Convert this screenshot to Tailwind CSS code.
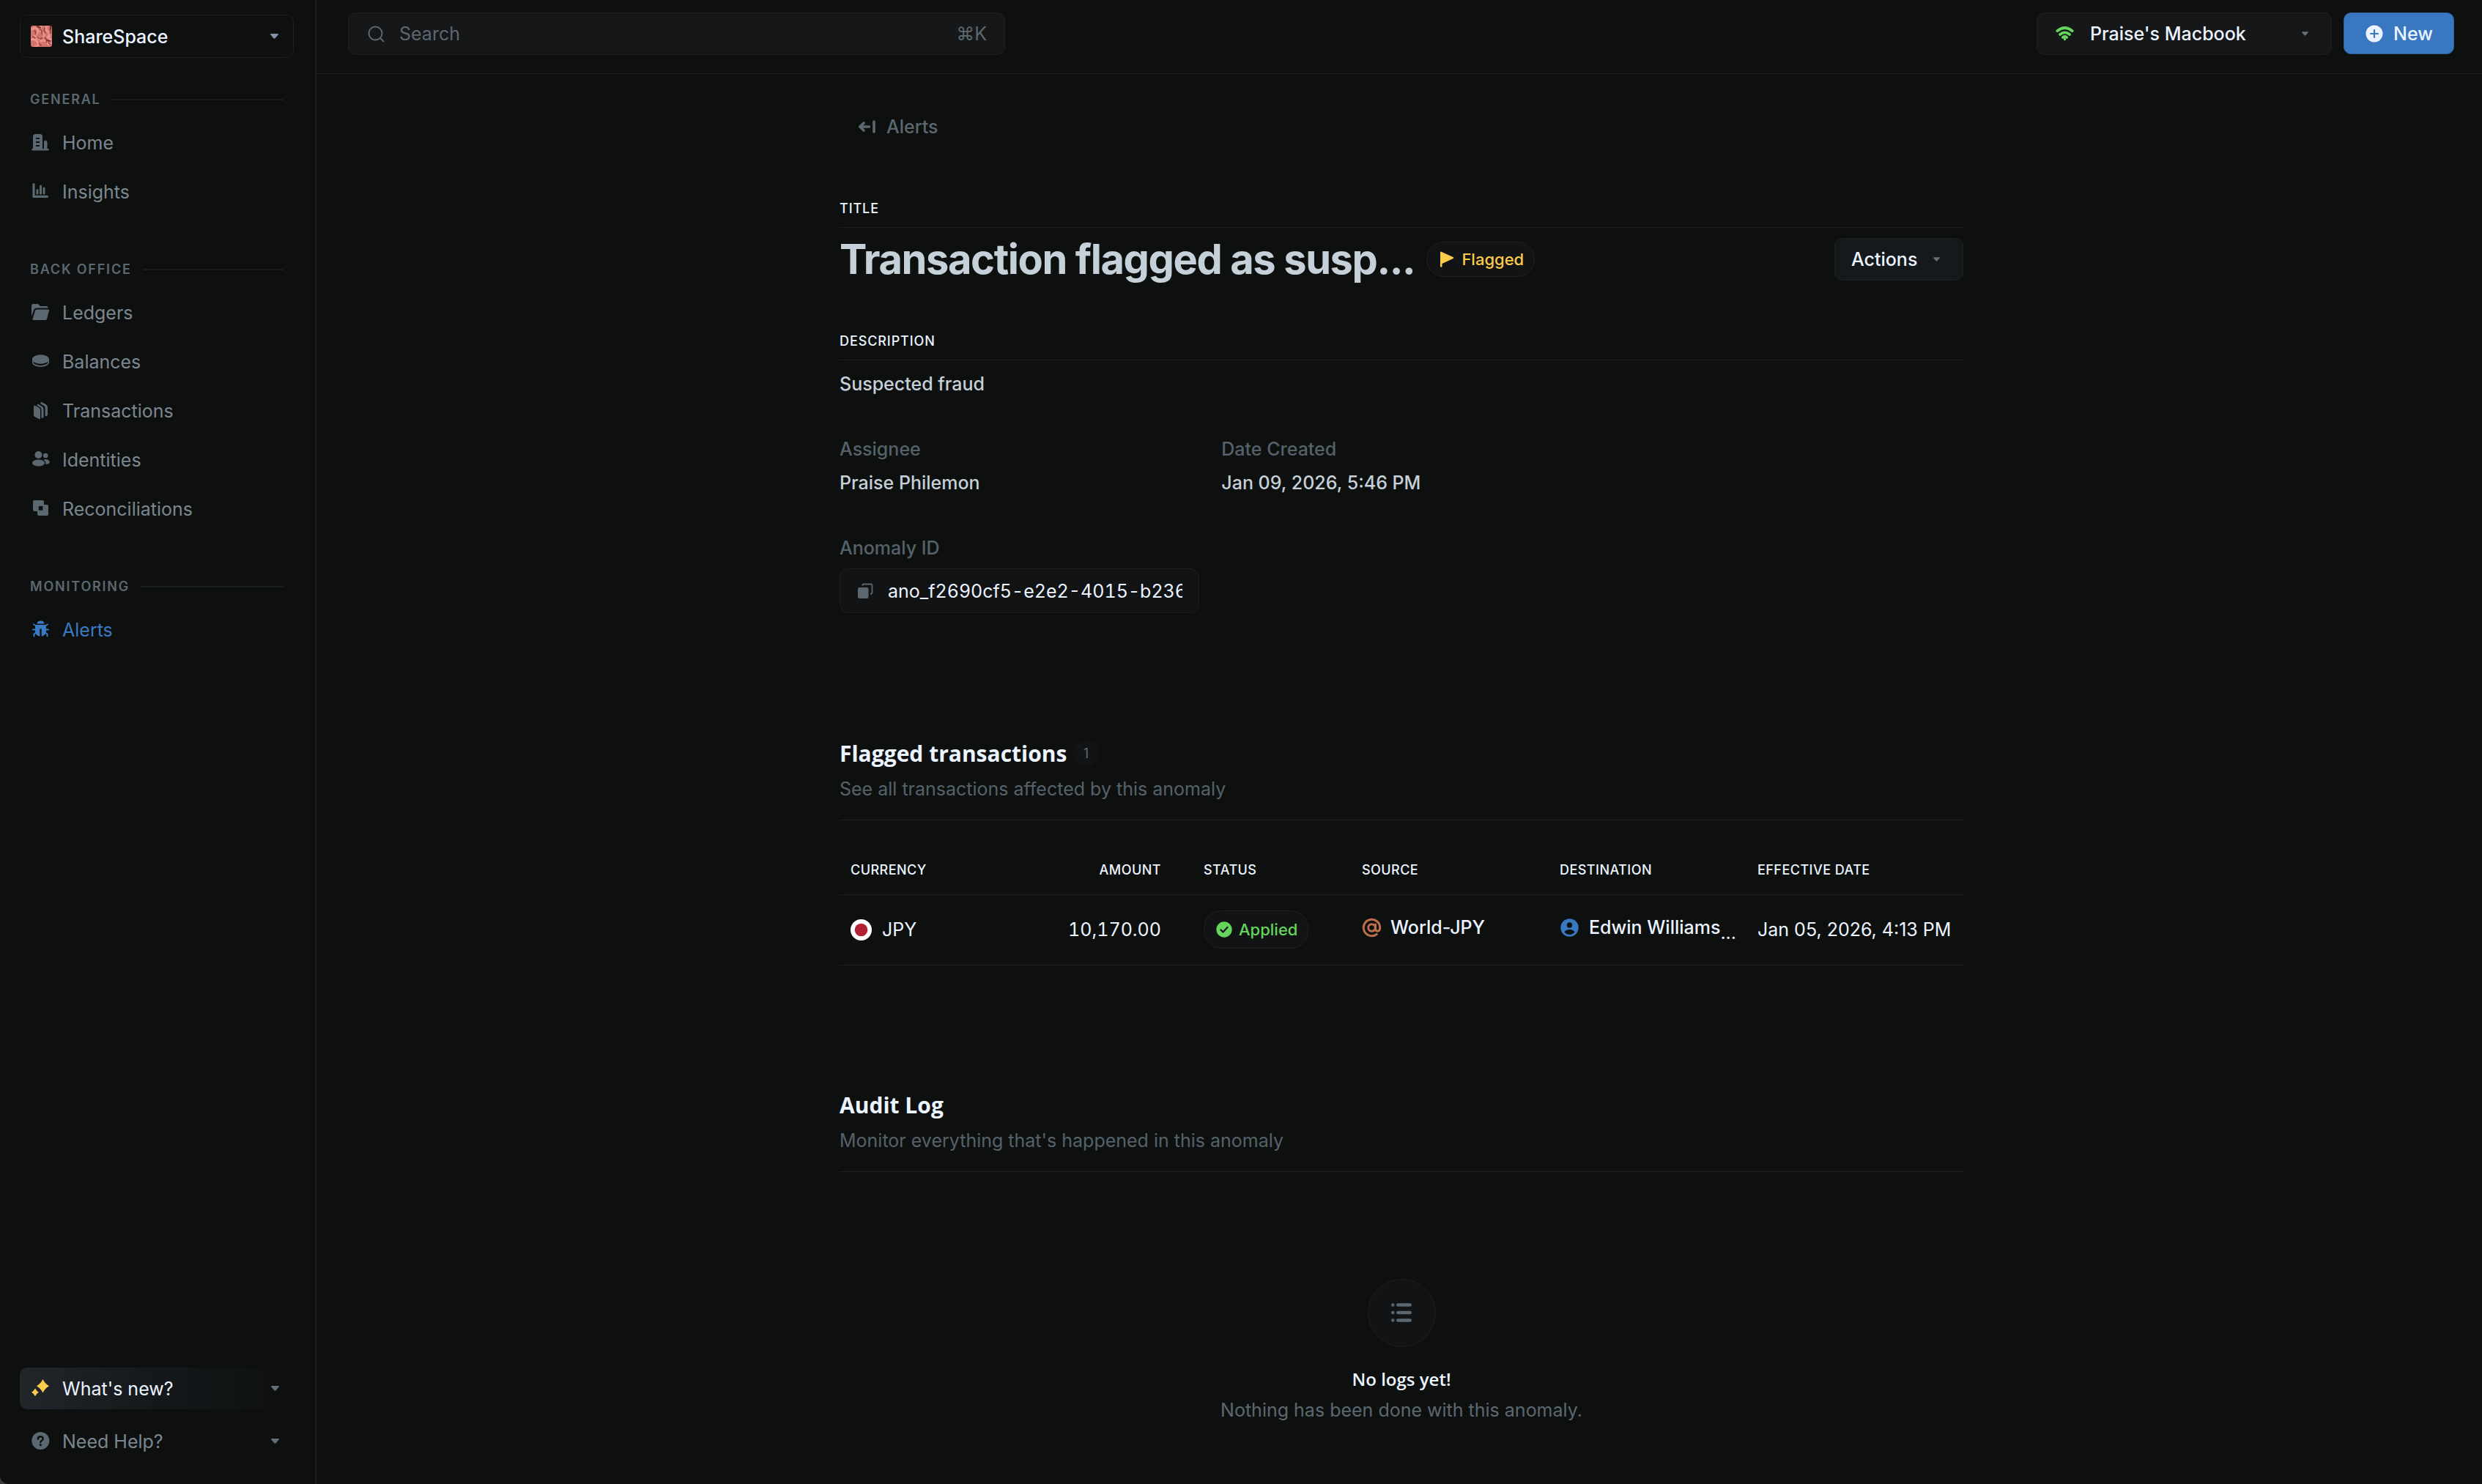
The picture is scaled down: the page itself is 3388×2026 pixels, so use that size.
<!DOCTYPE html>
<html lang="en">
<head>
<meta charset="utf-8">
<meta name="viewport" content="width=device-width, initial-scale=1">
<title>ShareSpace – Alerts</title>
<script src="https://cdn.jsdelivr.net/npm/@tailwindcss/browser@4"></script>
</head>
<body class="bg-[#3a3c3b]">
<div class="flex min-h-screen rounded-bl-[12px] bg-[#0e100f] font-['Inter',sans-serif] text-[25px] leading-[32px] text-[#ebf4ff]">

  <!-- Sidebar -->
  <aside class="flex w-[432px] shrink-0 flex-col border-r-2 border-[#1c1f1f] pt-[20px] pb-[30px] pl-[27px] pr-[29px]">
    <button type="button" class="flex h-[59px] items-center rounded-[10px] border border-[#1c1f20] pr-[20px] pl-[14px] font-medium">
      <svg class="size-[29px] rounded-[3px]" viewBox="0 0 29 29" aria-hidden="true">
        <rect width="29" height="29" fill="#d4736b"/>
        <g fill="none" stroke-linecap="round">
          <path d="M2 5q4-4 7 0t-2 7 5 6M14 1q-3 6 2 8t0 9M22 0q-3 5 1 8t0 8M1 19q5-2 8 3t-3 7M14 21q5-2 8 2t6 1M26 12q-3 4 1 7" stroke="#e8958c" stroke-width="3"/>
          <path d="M5 7q3 2 1 5M12 5q4 1 3 6M19 3q-2 5 1 7M26 5q2 4 0 6M9 16q3 3 7 1M19 16q4 4 2 7M3 15l3 2M24 23l3 3M11 24l3 3" stroke="#9c423d" stroke-width="1.600"/>
          <path d="M9 1l4 2M27 1v4M22 20l4 1" stroke="#74302d" stroke-width="2"/>
        </g>
      </svg>
      <span class="ml-[14px]">ShareSpace</span>
      <svg class="ml-auto h-[7px] w-[11px] fill-[#8490a8]" viewBox="0 0 11 7" aria-hidden="true"><path d="M1 0h9q1.500.4.5 1.700L6.500 6.300q-1 1-2 0L.5 1.700Q-.5.4 1 0z"/></svg>
    </button>

    <nav class="mt-[44px] flex flex-col gap-[65px] text-[#7a8790]" aria-label="Main">
      <section>
        <h2 class="flex h-[26px] items-center gap-[15px] pr-[14px] pl-[14px] text-[18px] font-semibold tracking-widest text-[#5b6871] uppercase">General<span class="h-[2px] flex-1 bg-[#1b1e1e]"></span></h2>
        <ul class="mt-[18px] flex flex-col gap-[11px]">
          <li><a href="#" class="flex h-[56px] items-center gap-[17px] pl-[15px]">
            <svg class="size-[26px] fill-[#5b6871]" viewBox="0 0 26 26" aria-hidden="true"><path fill-rule="evenodd" d="M3 4.500Q3 1 6.500 1h6Q16 1 16 4.500V21h2v-9q0-2.500 2-2.500t2.500 2.500V21h1q1.500.2 1.500 1.200T23.500 23.500h-21Q1 23.300 1 22.200T2.500 21H3zM7 6v2h5V6zm0 5v2h5v-2zm0 5v2h5v-2z"/></svg>Home</a></li>
          <li><a href="#" class="flex h-[56px] items-center gap-[17px] pl-[15px]">
            <svg class="size-[26px] fill-none stroke-[#5b6871]" viewBox="0 0 26 26" stroke-linecap="round" stroke-linejoin="round" aria-hidden="true"><path stroke-width="3.200" d="M4 2.600V19.400h18.400"/><path stroke-width="3" d="M9 10.500v4.500M13.500 5v10M18 8v7"/></svg>Insights</a></li>
        </ul>
      </section>
      <section>
        <h2 class="flex h-[26px] items-center gap-[15px] pr-[14px] pl-[14px] text-[18px] font-semibold tracking-widest text-[#5b6871] uppercase">Back Office<span class="h-[2px] flex-1 bg-[#1b1e1e]"></span></h2>
        <ul class="mt-[18px] flex flex-col gap-[11px]">
          <li><a href="#" class="flex h-[56px] items-center gap-[17px] pl-[15px]">
            <svg class="size-[26px] fill-[#5b6871]" viewBox="0 0 26 26" aria-hidden="true"><path d="M1 3Q1 1 3 1h7l3 3h9q1.500 0 1.500 2.500H8Q5 6.500 4 9.500L1 18z"/><path d="M8 8.500h16q1.500 0 1 1.500l-3 11.500q-.5 1.500-2 1.500H4Q2 23 2.500 21.500L6 10q.5-1.500 2-1.500z"/></svg>Ledgers</a></li>
          <li><a href="#" class="flex h-[56px] items-center gap-[17px] pl-[15px]">
            <svg class="size-[26px] fill-[#5b6871]" viewBox="0 0 26 26" aria-hidden="true"><ellipse cx="13.500" cy="9.500" rx="11.500" ry="6.200"/><path d="M2 9.500v4.200c0 3.400 5 6.100 11.500 6.100S25 17 25 13.700V9.500h-1.600v4c0 2.300-4.400 4.400-9.900 4.400s-9.900-2.100-9.900-4.400v-4z"/></svg>Balances</a></li>
          <li><a href="#" class="flex h-[56px] items-center gap-[17px] pl-[15px]">
            <svg class="size-[26px] fill-[#5b6871]" viewBox="0 0 26 26" aria-hidden="true"><path d="M4 7q0-2 2-1.200l5.500 3Q13 9.700 13 11.500V23q0 2-2 1l-5.500-3Q4 20.200 4 18.500z"/><path d="M8.500 5.400q0-2.400 2-1.400l4.500 2.500q2.500 1.400 2.500 4V22q-1.500 1.200-3 .6V11q0-2.200-2-3.200z"/><path d="M13 3.100Q13.500.4 15.500 1.300l5 2.800Q23 5.500 23 8v11q-1.800 1.700-3.400.9V9q0-2.200-2-3.300z"/></svg>Transactions</a></li>
          <li><a href="#" class="flex h-[56px] items-center gap-[17px] pl-[15px]">
            <svg class="size-[26px] fill-[#5b6871]" viewBox="0 0 26 26" aria-hidden="true"><circle cx="10.500" cy="6" r="5"/><ellipse cx="10.500" cy="17" rx="8.500" ry="4.600"/><circle cx="20.200" cy="7" r="3.300"/><path d="M17.300 12.400q6.800-1.400 8.500 3 .4 3.600-5.800 3.300 1.300-3.600-2.700-6.300z"/></svg>Identities</a></li>
          <li><a href="#" class="flex h-[56px] items-center gap-[17px] pl-[15px]">
            <svg class="size-[26px] fill-[#5b6871]" viewBox="0 0 26 26" aria-hidden="true"><path fill-rule="evenodd" d="M5 1h11q2 0 2 2v4h4q2 0 2 2v11q0 2-2 2H11q-2 0-2-2v-4H5q-2 0-2-2V3q0-2 2-2zm5.800 8.500v5.300h5.600v-5.900h-5z"/></svg>Reconciliations</a></li>
        </ul>
      </section>
      <section>
        <h2 class="flex h-[26px] items-center gap-[15px] pr-[14px] pl-[14px] text-[18px] font-semibold tracking-widest text-[#5b6871] uppercase">Monitoring<span class="h-[2px] flex-1 bg-[#1b1e1e]"></span></h2>
        <ul class="mt-[18px] flex flex-col gap-[11px]">
          <li><a href="#" aria-current="page" class="flex h-[56px] items-center gap-[17px] pl-[15px] text-[#3a79c3]">
            <svg class="size-[26px] fill-[#3a79c3] stroke-[#3a79c3]" viewBox="0 0 26 26" aria-hidden="true"><path stroke="none" d="M8.500 4.500Q9 .5 13.500.5t5 4zM6.500 6h14l.5 3v6q-.5 5.600-6.300 6.800V11.500h-2.400v10.300Q6.500 20.600 6 15V9z"/><path fill="none" stroke-width="2" stroke-linecap="round" d="M7.500 7.500L4 5.500M19.500 7.500L23 5.500M7 12.500H3M20 12.500h4M7.500 16.500l-3 2v3M19.500 16.500l3 2v3"/></svg>Alerts</a></li>
        </ul>
      </section>
    </nav>

    <div class="mt-auto flex flex-col gap-[15px]">
      <button type="button" class="flex h-[57px] items-center gap-[17px] rounded-[10px] bg-linear-to-r from-[#21262a] via-[#15181b] to-[#0e100f] pr-[20px] pl-[15px]">
        <svg class="size-[26px] fill-[#fbcb4d]" viewBox="0 0 26 26" aria-hidden="true"><path d="M16.500 0q3 6.200 8.500 9.200-5.500 3-8.500 9.300-3-6.300-8.500-9.300 5.500-3 8.500-9.200zM6 12.500q2 3.500 4.800 5.300Q8 19.500 6 23.300 4 19.500 1 17.800 4 16 6 12.500z"/></svg>What's new?
        <svg class="ml-auto h-[7px] w-[11px] fill-[#63707a]" viewBox="0 0 11 7" aria-hidden="true"><path d="M1 0h9q1.500.4.5 1.700L6.500 6.300q-1 1-2 0L.5 1.700Q-.5.4 1 0z"/></svg>
      </button>
      <button type="button" class="flex h-[57px] items-center gap-[17px] pr-[20px] pl-[15px] text-[#7a8790]">
        <svg class="size-[26px]" viewBox="0 0 26 26" aria-hidden="true"><circle cx="13.300" cy="12" r="12" fill="#5b6871"/><path d="M9.900 9.500q0-3.200 3.400-3.200t3.400 3q0 1.600-1.700 2.500-1.700.9-1.700 2.200" fill="none" stroke="#0e100f" stroke-width="2.400" stroke-linecap="round"/><circle cx="13.300" cy="17.600" r="1.600" fill="#0e100f"/></svg>Need Help?
        <svg class="ml-auto h-[7px] w-[11px] fill-[#63707a]" viewBox="0 0 11 7" aria-hidden="true"><path d="M1 0h9q1.500.4.5 1.700L6.500 6.300q-1 1-2 0L.5 1.700Q-.5.4 1 0z"/></svg>
      </button>
    </div>
  </aside>

  <div class="flex min-w-0 flex-1 flex-col">
    <!-- Top bar -->
    <header class="flex h-[101px] items-start border-b border-[#1d2020] pt-[17px] pr-[38px] pl-[43px]">
      <label class="flex h-[58px] w-[897px] items-center rounded-[10px] border border-[#1c1f20] bg-[#151719] pr-[24px] pl-[26px] text-[#5b6871]">
        <svg class="size-[23px] shrink-0 fill-none stroke-[#5b6871]" viewBox="0 0 23 23" stroke-width="2" stroke-linecap="round" aria-hidden="true"><circle cx="10.500" cy="10.500" r="9"/><path d="M17 17l4.500 4.500"/></svg>
        <input type="search" aria-label="Search" placeholder="Search" class="ml-[20px] h-full min-w-0 flex-1 bg-transparent outline-none placeholder:text-[#5b6871]">
        <kbd class="font-['Inter',sans-serif]">⌘K</kbd>
      </label>
      <button type="button" class="ml-auto flex h-[58px] w-[403px] items-center rounded-[10px] border border-[#1c1f20] bg-[#151719] pr-[31px] pl-[25px] font-medium">
        <svg class="h-[20px] w-[25px] fill-none stroke-[#66d45c]" viewBox="0 0 25 20" stroke-width="3.700" stroke-linecap="round" aria-hidden="true"><path d="M2.200 6.200q10.300-8.400 20.600 0M6 11q6.500-5.200 13 0M9.800 15q2.700-2 5.400 0"/><circle cx="12.500" cy="17.600" r=".8" stroke-width="2"/></svg>
        <span class="ml-[22px]">Praise's Macbook</span>
        <svg class="ml-auto h-[6px] w-[9px] fill-[#63707a]" viewBox="0 0 11 7" aria-hidden="true"><path d="M1 0h9q1.500.4.5 1.700L6.500 6.300q-1 1-2 0L.5 1.700Q-.5.4 1 0z"/></svg>
      </button>
      <button type="button" class="ml-[16px] flex h-[57px] w-[151px] items-center gap-[14px] rounded-[10px] border border-[#2f5f97] bg-[#3978c1] pl-[29px] font-medium">
        <svg class="size-[24px]" viewBox="0 0 24 24" aria-hidden="true"><circle cx="12" cy="12" r="11.500" fill="#ebf4ff"/><path d="M12 7v10M7 12h10" stroke="#3978c1" stroke-width="2.200" stroke-linecap="round"/></svg>New
      </button>
    </header>

    <main class="flex-1 pl-[6px]">
      <div class="mx-auto max-w-[1534px] pt-[56px] pb-[60px]">
        <a href="#" class="inline-flex items-center gap-[15px] pl-[25px] align-top font-medium text-[#5b6871]">
          <svg class="h-[20px] w-[24px] fill-none stroke-[#5b6871]" viewBox="0 0 24 20" stroke-width="3.600" stroke-linecap="round" stroke-linejoin="round" aria-hidden="true"><path d="M3 10h12.500M8 5l-5.200 5L8 15M22 3v14"/></svg>Alerts</a>

        <h2 class="mt-[84px] border-b border-[#1d2020] pb-[13px] text-[18px] leading-[24px] font-medium tracking-wider uppercase">Title</h2>
        <div class="mt-[14px] flex h-[58px] items-center">
          <h1 class="text-[56px] leading-[58px] font-bold tracking-tight text-[#c5d0d9]">Transaction flagged as susp...</h1>
          <span class="ml-[16px] flex h-[48px] items-center gap-[10px] rounded-full border border-[#1e2123] bg-[#121315] pr-[14px] pl-[18px] text-[22px] font-medium text-[#fbcb4d]">
            <svg class="h-[22px] w-[19px] fill-[#fbcb4d]" viewBox="0 0 19 22" aria-hidden="true"><path d="M0 1.500Q.2 0 2 .9l15.500 7q1.800 1 0 2L2.500 17v4q-1.500 1.500-2.500 0z"/></svg>Flagged</span>
          <button type="button" class="ml-auto flex h-[58px] w-[176px] items-center rounded-[10px] border border-[#1c1f20] bg-[#15191c] pr-[31px] pl-[22px] font-medium">Actions
            <svg class="ml-auto h-[6px] w-[9px] fill-[#63707a]" viewBox="0 0 11 7" aria-hidden="true"><path d="M1 0h9q1.500.4.5 1.700L6.500 6.300q-1 1-2 0L.5 1.700Q-.5.4 1 0z"/></svg></button>
        </div>

        <h2 class="mt-[71px] border-b border-[#1d2020] pb-[13px] text-[18px] leading-[24px] font-medium tracking-wider uppercase">Description</h2>
        <p class="mt-[16px] font-medium text-[#c5d0d9]">Suspected fraud</p>

        <dl class="mt-[57px] grid grid-cols-3 gap-x-[30px] gap-y-[57px] font-medium text-[#c5d0d9]">
          <div><dt class="text-[#55626b]">Assignee</dt><dd class="mt-[14px]">Praise Philemon</dd></div>
          <div><dt class="text-[#55626b]">Date Created</dt><dd class="mt-[14px]">Jan 09, 2026, 5:46 PM</dd></div>
          <div class="col-start-1"><dt class="text-[#55626b]"><label for="anomaly-id">Anomaly ID</label></dt>
            <dd class="mt-[12px] flex h-[61px] items-center rounded-[12px] border border-[#1c1f20] bg-[#121315] pr-[22px] pl-[23px]">
              <button type="button" aria-label="Copy" class="shrink-0"><svg class="block h-[22px] w-[22px]" viewBox="0 0 22 22" aria-hidden="true"><path d="M7 3.500Q7.300 1.500 9.500 1.500h9q2 0 2 2v9q0 2.300-2.500 2.500" fill="none" stroke="#5b6871" stroke-width="1.800"/><rect x="1" y="6" width="14.500" height="15" rx="2.500" fill="#5b6871"/></svg></button>
              <input id="anomaly-id" readonly value="ano_f2690cf5-e2e2-4015-b2369" class="ml-[20px] h-full min-w-0 flex-1 bg-transparent font-normal text-[#ebf4ff] tabular-nums outline-none">
            </dd></div>
        </dl>

        <section class="mt-[172px]">
          <div class="border-b border-[#1d2020] pb-[26px]">
            <div class="flex items-center gap-[8px]">
              <h2 class="font-['Open_Sans',sans-serif] text-[30px] leading-[40px] font-bold">Flagged transactions</h2>
              <span class="flex size-[36px] items-center justify-center rounded-full bg-[#121315] text-[18px] text-[#5b6871]">1</span>
            </div>
            <p class="mt-[12px] text-[#55626b]">See all transactions affected by this anomaly</p>
          </div>
          <table class="mt-[35px] w-full table-fixed border-collapse text-left">
            <colgroup><col class="w-[227px]"><col class="w-[255px]"><col class="w-[216px]"><col class="w-[270px]"><col class="w-[270px]"><col></colgroup>
            <thead>
              <tr class="h-[66px] border-b border-[#1d2020] text-[18px] tracking-wide uppercase">
                <th scope="col" class="pl-[15px] font-medium">Currency</th>
                <th scope="col" class="pr-[43px] text-right font-medium">Amount</th>
                <th scope="col" class="pl-[15px] font-medium">Status</th>
                <th scope="col" class="pl-[15px] font-medium">Source</th>
                <th scope="col" class="pl-[15px] font-medium">Destination</th>
                <th scope="col" class="pl-[15px] font-medium">Effective Date</th>
              </tr>
            </thead>
            <tbody>
              <tr class="h-[96px] border-b border-[#1d2020]">
                <td class="pl-[15px]"><span class="flex items-center gap-[14px]"><svg class="size-[29px]" viewBox="0 0 29 29" aria-hidden="true"><circle cx="14.500" cy="14.500" r="14.500" fill="#fff"/><circle cx="14.500" cy="14.500" r="8.800" fill="#b22234"/></svg>JPY</span></td>
                <td class="pr-[43px] text-right tabular-nums">10,170.00</td>
                <td class="pl-[15px]"><span class="inline-flex h-[52px] items-center gap-[9px] rounded-[24px] border border-[#1e2123] bg-[#121315] pr-[14px] pl-[16px] align-middle text-[22px] font-medium text-[#66d45c]"><svg class="size-[22px]" viewBox="0 0 22 22" aria-hidden="true"><circle cx="11" cy="11" r="10.700" fill="#66d45c"/><path d="M6.500 11.500l3 3 6-6.500" fill="none" stroke="#121315" stroke-width="2.200" stroke-linecap="round" stroke-linejoin="round"/></svg>Applied</span></td>
                <td class="pb-[6px] pl-[15px] font-medium"><a href="#" class="flex items-center gap-[12px]"><svg class="size-[27px] fill-none stroke-[#bd6f4c]" viewBox="0 0 27 27" stroke-width="3" stroke-linecap="round" aria-hidden="true"><circle cx="13.500" cy="13.500" r="4.800"/><path d="M18.500 9v6q0 3.300 3 3.300t3.200-4.800a11.200 11.200 0 1 0-4.500 9"/></svg>World-JPY</a></td>
                <td class="pb-[6px] pl-[15px] font-medium whitespace-nowrap"><a href="#" class="flex items-center"><svg class="mx-px size-[25px]" viewBox="0 0 25 25" aria-hidden="true"><circle cx="12.500" cy="12.500" r="12.200" fill="#3978c1"/><circle cx="12.500" cy="9" r="3.700" fill="#0e100f"/><path d="M5.500 18.500q2-3.500 7-3.500t7 3.500q-3 3.500-7 3.500t-7-3.500z" fill="#0e100f"/></svg><span class="ml-[13px]">Edwin Williams</span><span class="pt-[14px] font-normal leading-[26px]">...</span></a></td>
                <td class="pl-[15px] whitespace-nowrap">Jan 05, 2026, 4:13 PM</td>
              </tr>
            </tbody>
          </table>
        </section>

        <section class="mt-[171px]">
          <div class="border-b border-[#1d2020] pb-[26px]">
            <h2 class="font-['Open_Sans',sans-serif] text-[30px] leading-[40px] font-bold">Audit Log</h2>
            <p class="mt-[12px] text-[#55626b]">Monitor everything that's happened in this anomaly</p>
          </div>
          <div class="mt-[146px] flex flex-col items-center">
            <div class="flex size-[93px] items-center justify-center rounded-full border border-[#1c1f20] bg-[#121315]">
              <svg class="h-[28px] w-[28px] fill-none stroke-[#5b6871]" viewBox="0 0 28 28" stroke-width="4.600" stroke-linecap="round" aria-hidden="true"><path d="M2.300 3.500h.01M2.300 14h.01M2.300 24.500h.01M9.300 3.500h16.400M9.300 14h16.400M9.300 24.500h16.400"/></svg>
            </div>
            <h3 class="mt-[28px] font-['Open_Sans',sans-serif] text-[24px] font-semibold">No logs yet!</h3>
            <p class="mt-[10px] text-[#5b6871]">Nothing has been done with this anomaly.</p>
          </div>
        </section>
      </div>
    </main>
  </div>
</div>
</body>
</html>
